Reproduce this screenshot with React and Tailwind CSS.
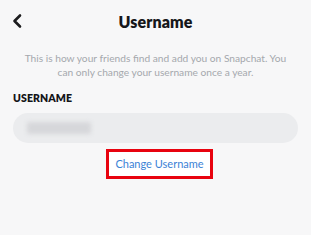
import React from 'react';

function App() {
  return (
    <div className="h-[235px] w-[311px] overflow-hidden bg-[#f7f7f8]" style={{ fontFamily: 'Lato, "Noto Sans", sans-serif' }}>
      <div className="relative flex h-[42px] items-center justify-center">
        <button className="absolute left-[11px] top-[13px] text-[#1c1c1e]">
          <svg width="12" height="16" viewBox="0 0 12 16" fill="none">
            <path d="M9 2.5L3.5 8L9 13.5" stroke="currentColor" strokeWidth="2.6" strokeLinecap="round" strokeLinejoin="round" />
          </svg>
        </button>
        <h1 className="mt-[1px] text-[16px] font-extrabold tracking-[0.1px] text-[#16171a]">Username</h1>
      </div>

      <p className="mx-auto mt-[10px] w-[262px] text-center text-[10.2px] leading-[13.5px] text-[#a5a8ad]">
        This is how your friends find and add you on Snapchat. You can only change your username once a year.
      </p>

      <div className="mt-[12px] px-[13px] text-[10.5px] font-extrabold tracking-[0.1px] text-[#141518]">USERNAME</div>

      <div className="mx-[13px] mt-[6px] flex h-[30px] items-center rounded-full bg-[#ebecee] px-[14px]">
        <span className="h-[12px] w-[64px] rounded-[2px] bg-[#d6d7da] blur-[2px]" />
      </div>

      <div className="mt-[6px] flex justify-center">
        <div className="ml-[8px] flex h-[30px] w-[107px] items-center justify-center border-[3px] border-[#e8030f] bg-white">
          <span className="text-[11px] text-[#3b82d6]">Change Username</span>
        </div>
      </div>
    </div>
  );
}

export default App;
